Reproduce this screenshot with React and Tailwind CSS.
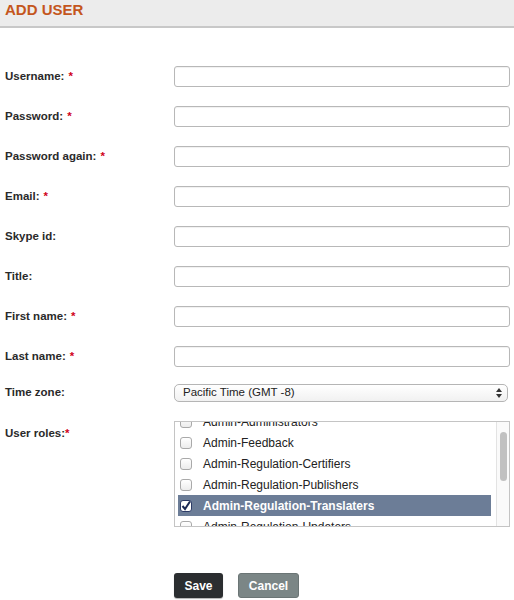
import React, { useState } from 'react';

const fields = [
  { label: 'Username:', required: true, type: 'text' },
  { label: 'Password:', required: true, type: 'password' },
  { label: 'Password again:', required: true, type: 'password' },
  { label: 'Email:', required: true, type: 'text' },
  { label: 'Skype id:', required: false, type: 'text' },
  { label: 'Title:', required: false, type: 'text' },
  { label: 'First name:', required: true, type: 'text' },
  { label: 'Last name:', required: true, type: 'text' },
];

const roles = [
  'Admin-Administrators',
  'Admin-Feedback',
  'Admin-Regulation-Certifiers',
  'Admin-Regulation-Publishers',
  'Admin-Regulation-Translaters',
  'Admin-Regulation-Updaters',
];

const Star = () => <span className="text-[#d0021b] ml-[4px]">*</span>;

const App = () => {
  const [selected, setSelected] = useState(['Admin-Regulation-Translaters']);

  const toggleRole = (role) => {
    setSelected(prev =>
      prev.includes(role) ? prev.filter(r => r !== role) : [...prev, role]
    );
  };

  return (
    <div className="w-[514px] h-[600px] bg-white font-['Liberation_Sans',Arial,sans-serif] text-[#2a2a2a] overflow-hidden">
      {/* 헤더 */}
      <div className="h-[28px] bg-[#ececec] border-b-2 border-[#c8c8c8] px-[5px] flex items-start">
        <h1 className="text-[15px] font-bold text-[#c4561d] leading-[20px]">ADD USER</h1>
      </div>

      {/* 입력 필드 */}
      <div className="pt-[38px]">
        {fields.map((f) => (
          <div key={f.label} className="flex items-center h-[21px] mb-[19px]">
            <label className="w-[174px] pl-[5px] text-[11.5px] font-bold">
              {f.label}
              {f.required && <Star />}
            </label>
            <input
              type={f.type}
              className="w-[336px] h-[21px] border border-[#b8b8b8] rounded-[3px] bg-white shadow-[inset_0_1px_1px_rgba(0,0,0,0.06)]"
            />
          </div>
        ))}

        {/* 시간대 */}
        <div className="flex items-center h-[18px] -mt-[2px]">
          <label className="w-[174px] pl-[5px] text-[11.5px] font-bold">Time zone:</label>
          <div className="w-[334px] h-[18px] border border-[#b5b5b5] rounded-[5px] bg-gradient-to-b from-white to-[#f1f1f1] flex items-center justify-between pl-[8px] pr-[5px] text-[11.5px] text-[#222]">
            <span>Pacific Time (GMT -8)</span>
            <svg width="6" height="10" viewBox="0 0 6 10">
              <path d="M3 0 L6 4 L0 4 Z" fill="#333" />
              <path d="M0 6 L6 6 L3 10 Z" fill="#333" />
            </svg>
          </div>
        </div>

        {/* 사용자 역할 */}
        <div className="flex items-start mt-[19px]">
          <label className="w-[174px] pl-[5px] text-[11.5px] font-bold pt-[4px]">
            User roles:<span className="text-[#d0021b]">*</span>
          </label>
          <div className="w-[336px] h-[106px] border border-[#c4c4c4] flex overflow-hidden">
            <div className="flex-1 overflow-hidden">
              <div className="-mt-[11px] pl-[3px] pr-[5px]">
                {roles.map((role) => {
                  const checked = selected.includes(role);
                  return (
                    <div
                      key={role}
                      onClick={() => toggleRole(role)}
                      className={`flex items-center h-[21px] text-[12px] ${checked ? 'bg-[#6c7d97] text-white font-bold' : 'text-[#222]'}`}
                    >
                      <span className={`w-[12px] h-[12px] ml-[2px] mr-[11px] rounded-[3px] border flex items-center justify-center ${checked ? 'bg-white border-[#2b3a66]' : 'border-[#a9a9a9] bg-gradient-to-b from-white to-[#ececec]'}`}>
                        {checked && (
                          <svg width="10" height="10" viewBox="0 0 10 10">
                            <path d="M1.5 5 L4 8 L9 0.5" stroke="#1c2a55" strokeWidth="2" fill="none" />
                          </svg>
                        )}
                      </span>
                      {role}
                    </div>
                  );
                })}
              </div>
            </div>
            <div className="w-[13px] border-l border-[#e3e3e3] bg-[#fafafa] pt-[10px] flex justify-center">
              <div className="w-[7px] h-[49px] rounded-full bg-[#c1c1c1]" />
            </div>
          </div>
        </div>

        {/* 버튼 */}
        <div className="flex mt-[46px] pl-[174px] gap-[15px]">
          <button className="w-[49px] h-[25px] bg-[#2b2e30] rounded-[3px] text-white text-[12px] font-bold shadow-[0_1px_1px_rgba(0,0,0,0.3)]">
            Save
          </button>
          <button className="w-[61px] h-[25px] bg-[#7b8686] border border-[#6b7575] rounded-[3px] text-white text-[12px] font-bold">
            Cancel
          </button>
        </div>
      </div>
    </div>
  );
};

export default App;
